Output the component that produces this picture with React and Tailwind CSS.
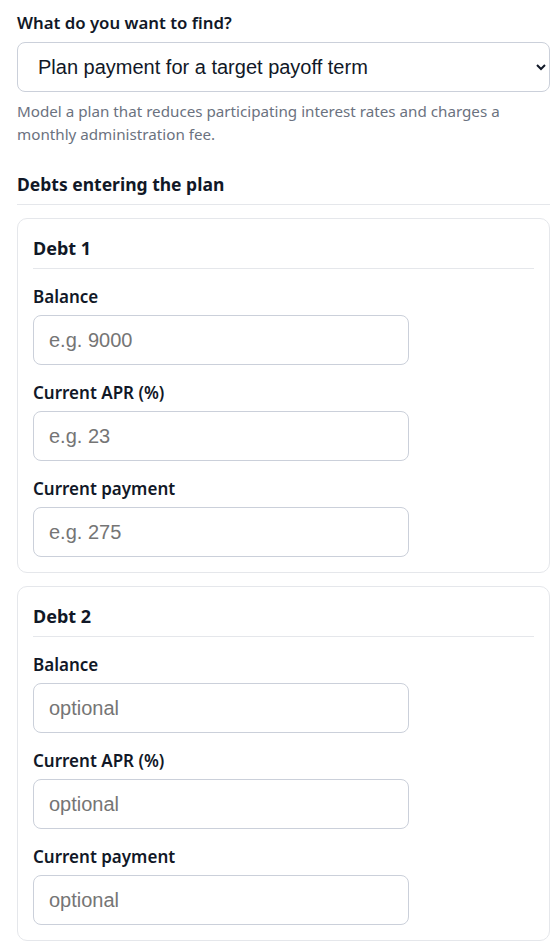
import React from "react";

const font = { fontFamily: '"Noto Sans", "Liberation Sans", sans-serif' };

function Field({ label, placeholder }) {
  return (
    <div className="mt-4 flex flex-col">
      <label className="text-[17px] leading-6 font-semibold text-[#111827] mb-1.5">{label}</label>
      <input
        type="text"
        placeholder={placeholder}
        className="w-[376px] h-[50px] rounded-lg border border-[#cbd0da] bg-white pl-[15px] text-[20px] text-[#111827] placeholder:text-[#757575] outline-none font-['Liberation_Sans',Arial,sans-serif]"
      />
    </div>
  );
}

function DebtCard({ title, placeholders }) {
  return (
    <div className="mt-[13px] rounded-[10px] border border-[#e5e7eb] bg-white p-[15px]">
      <div className="text-[18px] leading-7 font-bold text-[#111827] pb-1.5 border-b border-[#e5e7eb]">{title}</div>
      <Field label="Balance" placeholder={placeholders[0]} />
      <Field label="Current APR (%)" placeholder={placeholders[1]} />
      <Field label="Current payment" placeholder={placeholders[2]} />
    </div>
  );
}

export default function App() {
  return (
    <div className="bg-white min-h-[947px] pl-[17px] pt-[11px]" style={font}>
      <div className="w-[533px]">
        <label className="block text-[16.8px] leading-6 font-semibold text-[#111827]">What do you want to find?</label>
        <select
          defaultValue="term"
          className="mt-[7px] w-full h-[50px] rounded-lg border border-[#cbd0da] bg-white pl-4 pr-1 text-[20px] text-[#111827] font-['Liberation_Sans',Arial,sans-serif]"
        >
          <option value="term">Plan payment for a target payoff term</option>
          <option value="time">Payoff time for a fixed payment</option>
        </select>
        <p className="mt-2 text-[15.2px] leading-[23px] text-[#6b7280]">
          Model a plan that reduces participating interest rates and charges a monthly administration fee.
        </p>
        <div className="mt-[26px] text-[17.5px] leading-6 font-bold text-[#111827] pb-2 border-b border-[#e5e7eb]">
          Debts entering the plan
        </div>
        <DebtCard title="Debt 1" placeholders={["e.g. 9000", "e.g. 23", "e.g. 275"]} />
        <DebtCard title="Debt 2" placeholders={["optional", "optional", "optional"]} />
      </div>
    </div>
  );
}
